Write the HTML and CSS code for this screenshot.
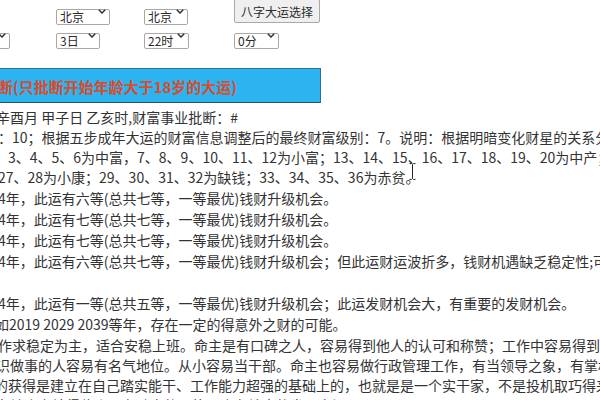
FILE: index.html
```html
<!DOCTYPE html>
<html lang="zh-CN">
<head>
<meta charset="utf-8">
<title>八字大运批断</title>
<link rel="stylesheet" href="styles.css">
</head>
<body>
<div class="page">
  <div class="controls">
    <div class="cell"></div>
    <div class="cell"><span class="sel w54"><select><option>北京</option></select><svg class="chev" viewBox="0 0 8 5"><path d="M0.8 0.8 L4 4 L7.2 0.8"/></svg></span></div>
    <div class="cell"><span class="sel w44"><select><option>北京</option></select><svg class="chev" viewBox="0 0 8 5"><path d="M0.8 0.8 L4 4 L7.2 0.8"/></svg></span></div>
    <div class="cell"><button class="btn" type="button">八字大运选择</button></div>

    <div class="cell"><span class="sel w42"><select><option>9月</option></select><svg class="chev" viewBox="0 0 8 5"><path d="M0.8 0.8 L4 4 L7.2 0.8"/></svg></span></div>
    <div class="cell"><span class="sel w44"><select><option>3日</option></select><svg class="chev" viewBox="0 0 8 5"><path d="M0.8 0.8 L4 4 L7.2 0.8"/></svg></span></div>
    <div class="cell"><span class="sel w45"><select><option>22时</option></select><svg class="chev" viewBox="0 0 8 5"><path d="M0.8 0.8 L4 4 L7.2 0.8"/></svg></span></div>
    <div class="cell"><span class="sel w45"><select><option>0分</option></select><svg class="chev" viewBox="0 0 8 5"><path d="M0.8 0.8 L4 4 L7.2 0.8"/></svg></span></div>
  </div>

  <div class="banner"><span class="banner-text">断(只批断开始年龄大于18岁的大运)</span></div>

  <div class="report">
    <div class="block b20">
      <div class="ln m4">辛酉月 甲子日 乙亥时,财富事业批断：#</div>
      <div class="ln m2">：10；根据五步成年大运的财富信息调整后的最终财富级别：7。说明：根据明暗变化财星的关系分析</div>
      <div class="ln m6">、3、4、5、6为中富，7、8、9、10、11、12为小富；13、14、15、16、17、18、19、20为中产；21</div>
      <div class="ln m2">27、28为小康；29、30、31、32为缺钱；33、34、35、36为赤贫。</div>
    </div>
    <div class="block b21">
      <div class="ln m2">4年，此运有六等(总共七等，一等最优)钱财升级机会。</div>
      <div class="ln m2">4年，此运有七等(总共七等，一等最优)钱财升级机会。</div>
      <div class="ln m2">4年，此运有七等(总共七等，一等最优)钱财升级机会。</div>
      <div class="ln m2">4年，此运有六等(总共七等，一等最优)钱财升级机会；但此运财运波折多，钱财机遇缺乏稳定性;可能</div>
      <div class="ln blank"></div>
      <div class="ln m2">4年，此运有一等(总共五等，一等最优)钱财升级机会；此运发财机会大，有重要的发财机会。</div>
      <div class="ln m5">如2019 2029 2039等年，存在一定的得意外之财的可能。</div>
    </div>
    <div class="block b20">
      <div class="ln m2">作求稳定为主，适合安稳上班。命主是有口碑之人，容易得到他人的认可和称赞；工作中容易得到领导</div>
      <div class="ln m4">识做事的人容易有名气地位。从小容易当干部。命主也容易做行政管理工作，有当领导之象，有掌权之</div>
      <div class="ln m6">的获得是建立在自己踏实能干、工作能力超强的基础上的，也就是是一个实干家，不是投机取巧得来的</div>
      <div class="ln m4">在社会上站得住脚，有踏实的可能，也有较大的发展空间</div>
    </div>
  </div>

  <svg class="ibeam" viewBox="0 0 7 17"><path d="M0.5 0.6 H2.6 L3.5 1.5 L4.4 0.6 H6.5 M3.5 1.5 V15.5 M0.5 16.4 H2.6 L3.5 15.5 L4.4 16.4 H6.5"/></svg>
</div>
</body>
</html>
```

FILE: styles.css
```css
html, body {
  margin: 0;
  padding: 0;
  background: #ffffff;
  overflow: hidden;
}

body {
  width: 600px;
  height: 400px;
  font-family: "Noto Sans CJK SC", "Noto Sans", sans-serif;
  color: #333333;
}

.page {
  position: relative;
  width: 600px;
  height: 400px;
  overflow: hidden;
}

/* ---- top controls ---- */
.controls {
  display: grid;
  grid-template-columns: 88px 88px 90px auto;
  grid-template-rows: 24px 16px;
  row-gap: 4px;
  margin-left: -32px;
  margin-top: -1px;
  align-items: center;
}

.cell {
  display: flex;
  align-items: center;
  height: 100%;
}

.sel {
  position: relative;
  display: inline-block;
  height: 16px;
}

.sel select {
  appearance: none;
  -webkit-appearance: none;
  box-sizing: border-box;
  width: 100%;
  height: 16px;
  margin: 0;
  padding: 0 0 0 3px;
  border: 1px solid #a8a8a8;
  border-radius: 2px;
  background: #ffffff;
  color: #2a2a2a;
  font-family: "Noto Sans CJK SC", sans-serif;
  font-size: 12px;
  line-height: 14px;
}

.w42 { width: 42px; }
.w44 { width: 44px; }
.w45 { width: 45px; }
.w54 { width: 54px; }

.chev {
  position: absolute;
  right: 4px;
  top: 6px;
  width: 8px;
  height: 5px;
  fill: none;
  stroke: #333333;
  stroke-width: 1.5;
  pointer-events: none;
}

.btn {
  box-sizing: border-box;
  width: 86px;
  height: 24px;
  margin: 0;
  padding: 0;
  border: 1px solid #a9a9a9;
  border-radius: 2px;
  background: #efefef;
  color: #2a2a2a;
  font-family: "Noto Sans CJK SC", sans-serif;
  font-size: 12px;
}

/* ---- banner ---- */
.banner {
  box-sizing: border-box;
  width: 331px;
  height: 35px;
  margin-top: 25px;
  margin-left: -10px;
  padding: 9px 0 0 7px;
  background: #2bb4ef;
  border: 1px solid #2a6f98;
  border-bottom-color: #24506c;
}

.banner-text {
  display: block;
  font-size: 15px;
  font-weight: bold;
  line-height: 18px;
  color: #dd4a2c;
  white-space: nowrap;
}

/* ---- report text ---- */
.report {
  margin-top: 4px;
  font-size: 14px;
}

.ln {
  white-space: nowrap;
}

.b20 .ln { line-height: 20px; }
.b21 .ln { line-height: 21px; }
.b21 { margin-top: 1px; }
.blank { height: 21px; }

.m2 { margin-left: -2px; }
.m4 { margin-left: -4px; }
.m5 { margin-left: -5px; }
.m6 { margin-left: -6px; }

/* mouse text cursor over the page */
.ibeam {
  position: absolute;
  left: 409px;
  top: 163px;
  width: 7px;
  height: 17px;
  fill: none;
  stroke: #222222;
  stroke-width: 1;
}
```
